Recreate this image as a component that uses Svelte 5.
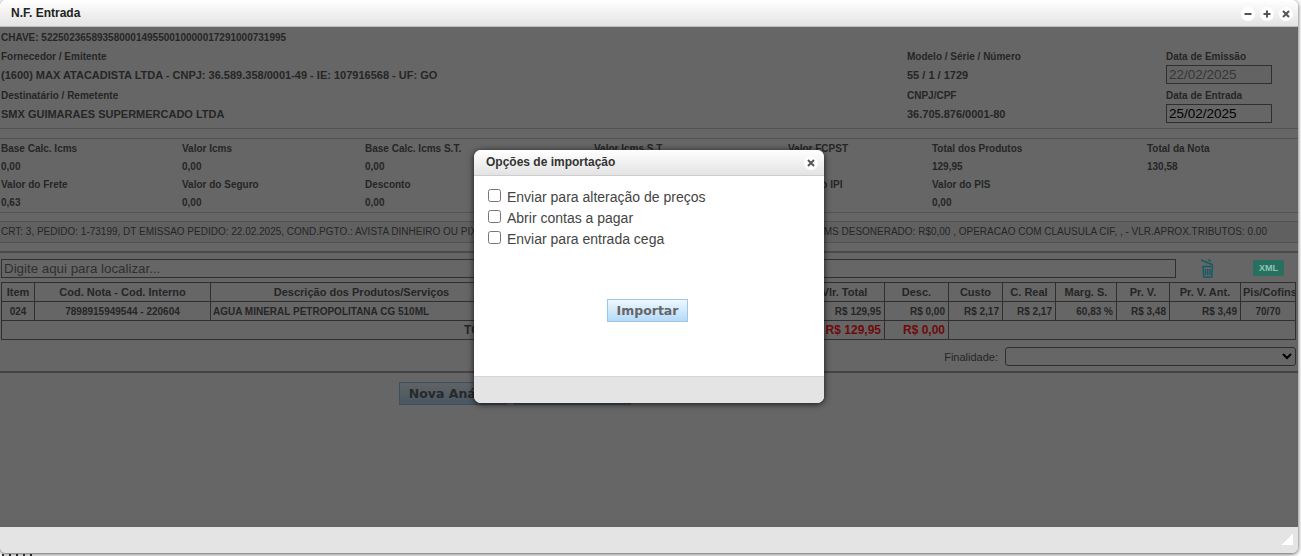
<script lang="ts">
	const totals = [
		[
			['Base Calc. Icms', '0,00'],
			['Valor Icms', '0,00'],
			['Base Calc. Icms S.T.', '0,00'],
			['Valor Icms S.T', '0,00'],
			['Valor FCPST', '0,00'],
			['Total dos Produtos', '129,95'],
			['Total da Nota', '130,58']
		],
		[
			['Valor do Frete', '0,63'],
			['Valor do Seguro', '0,00'],
			['Desconto', '0,00'],
			['Outras Despesas', '0,00'],
			['Valor do IPI', '0,00'],
			['Valor do PIS', '0,00'],
			['', '']
		]
	];
	const columns = [33, 176, 302, 292, 80, 64, 54, 53, 61, 53, 71, 55];
	const heads = [
		'Item',
		'Cod. Nota - Cod. Interno',
		'Descrição dos Produtos/Serviços',
		'',
		'Vlr. Total',
		'Desc.',
		'Custo',
		'C. Real',
		'Marg. S.',
		'Pr. V.',
		'Pr. V. Ant.',
		'Pis/Cofins'
	];
	const options = [
		'Enviar para alteração de preços',
		'Abrir contas a pagar',
		'Enviar para entrada cega'
	];
</script>

<div class="page">
	<div class="peek"></div>
	<div class="peek bottom"></div>
	<div class="window">
		<header class="titlebar">
			<span class="title">N.F. Entrada</span>
			<div class="controls">
				<button aria-label="minimizar" class="ctl">
					<svg viewBox="0 0 10 10"><path d="M1.5 5h7" /></svg>
				</button>
				<button aria-label="maximizar" class="ctl">
					<svg viewBox="0 0 10 10"><path d="M1.5 5h7M5 1.5v7" /></svg>
				</button>
				<button aria-label="fechar" class="ctl">
					<svg viewBox="0 0 10 10"><path d="M2 2l6 6M8 2l-6 6" /></svg>
				</button>
			</div>
		</header>

		<main class="body">
			<div class="chave">CHAVE: 52250236589358000149550010000017291000731995</div>
			<div class="head-grid">
				<span class="lbl">Fornecedor / Emitente</span>
				<span class="lbl">Modelo / Série / Número</span>
				<span class="lbl">Data de Emissão</span>
				<span class="val">(1600) MAX ATACADISTA LTDA - CNPJ: 36.589.358/0001-49 - IE: 107916568 - UF: GO</span>
				<span class="val">55 / 1 / 1729</span>
				<input class="date" disabled value="22/02/2025" />
				<span class="lbl">Destinatário / Remetente</span>
				<span class="lbl">CNPJ/CPF</span>
				<span class="lbl">Data de Entrada</span>
				<span class="val">SMX GUIMARAES SUPERMERCADO LTDA</span>
				<span class="val">36.705.876/0001-80</span>
				<input class="date" value="25/02/2025" />
			</div>

			<div class="gap"></div>

			<div class="totals">
				{#each totals as row}
					{#each row as cell}
						<div class="cell">
							<span class="lbl">{cell[0]}</span>
							<span class="amount">{cell[1]}</span>
						</div>
					{/each}
				{/each}
			</div>

			<div class="thin"></div>
			<div class="info">
				CRT: 3, PEDIDO: 1-73199, DT EMISSAO PEDIDO: 22.02.2025, COND.PGTO.: AVISTA DINHEIRO OU PIX, FRETE: R$0,63 , DESC.: R$0,00 , BASE ST: R$0,00 , FCP: R$0,00 , VLR.ICMS DESONERADO: R$0,00 , OPERACAO COM CLAUSULA CIF, , - VLR.APROX.TRIBUTOS: 0.00
			</div>
			<div class="spacer"></div>

			<div class="search-row">
				<input class="search" placeholder="Digite aqui para localizar..." />
				<svg class="trash" viewBox="0 0 15 19" aria-hidden="true">
					<path d="M1 1l12 5M8 .8l3 1.4" />
					<path d="M3 7.5h9.5l-.7 10.5H3.7zM5.5 10v6M7.7 10v6M10 10v6" />
				</svg>
				<span class="xml">XML</span>
			</div>

			<table>
				<colgroup>
					{#each columns as w}
						<col style={`width:${w}px`} />
					{/each}
				</colgroup>
				<thead>
					<tr>
						{#each heads as h}
							<th>{h}</th>
						{/each}
					</tr>
				</thead>
				<tbody>
					<tr>
						<td class="c">024</td>
						<td class="c">7898915949544 - 220604</td>
						<td>AGUA MINERAL PETROPOLITANA CG 510ML</td>
						<td></td>
						<td class="r">R$ 129,95</td>
						<td class="r">R$ 0,00</td>
						<td class="r">R$ 2,17</td>
						<td class="r">R$ 2,17</td>
						<td class="r">60,83 %</td>
						<td class="r">R$ 3,48</td>
						<td class="r">R$ 3,49</td>
						<td class="c">70/70</td>
					</tr>
					<tr class="sum">
						<td colspan="3" class="r total">TOTAL:</td>
						<td></td>
						<td class="r red"><span>R$ 129,95</span></td>
						<td class="r red"><span>R$ 0,00</span></td>
						<td colspan="6"></td>
					</tr>
				</tbody>
			</table>

			<div class="finalidade">
				<label for="fin">Finalidade:</label>
				<select id="fin"><option></option></select>
			</div>
			<div class="rule"></div>

			<div class="actions">
				<button class="btn first">Nova Análise</button>
				<button class="btn second">Importar Nota</button>
			</div>

			<div class="overlay"></div>

			<section class="modal">
				<div class="modal-head">
					<span>Opções de importação</span>
					<button aria-label="fechar" class="ctl">
						<svg viewBox="0 0 10 10"><path d="M2 2l6 6M8 2l-6 6" /></svg>
					</button>
				</div>
				<div class="modal-body">
					{#each options as o}
						<label class="opt"><input type="checkbox" />{o}</label>
					{/each}
					<button class="btn import">Importar</button>
				</div>
				<div class="modal-foot"></div>
			</section>
		</main>

		<footer class="foot">
			<span class="grip"></span>
		</footer>
	</div>
</div>

<style>
	:global(body) {
		margin: 0;
		background: #fff;
		font-family: 'Liberation Sans', Arial, sans-serif;
	}
	.page {
		position: relative;
		height: 556px;
		overflow: hidden;
	}
	.peek {
		position: absolute;
		left: 140px;
		top: 0;
		width: 45px;
		height: 2px;
		background: repeating-linear-gradient(90deg, #222 0 2px, #fff 2px 3px);
	}
	.peek.bottom {
		left: 2px;
		top: 554px;
		width: 30px;
		background: repeating-linear-gradient(90deg, #333 0 2px, #fff 2px 7px);
	}
	.window {
		position: relative;
		width: 1298px;
		height: 553px;
		display: flex;
		flex-direction: column;
		border-radius: 6px;
		box-shadow: 0 1px 4px rgba(0, 0, 0, 0.7);
		overflow: hidden;
		background: #fff;
	}
	.titlebar {
		height: 27px;
		flex: none;
		box-sizing: border-box;
		display: flex;
		align-items: center;
		justify-content: space-between;
		padding: 0 5px 0 11px;
		background: linear-gradient(#fff, #e3e3e3);
		border-bottom: 1px solid #bbb;
	}
	.title {
		font-size: 12px;
		font-weight: bold;
		color: #222;
	}
	.controls {
		display: flex;
		gap: 5px;
		margin-top: 2px;
	}
	.ctl {
		width: 14px;
		height: 14px;
		padding: 2px;
		border: 0;
		border-radius: 50%;
		background: #fff;
		display: block;
	}
	.ctl svg {
		display: block;
		width: 10px;
		height: 10px;
		fill: none;
		stroke: #555;
		stroke-width: 2;
	}
	.body {
		position: relative;
		flex: 1;
		min-height: 0;
		background: #fff;
		color: #606060;
		font-size: 10px;
	}
	.overlay {
		position: absolute;
		inset: 0;
		background: rgba(0, 0, 0, 0.6);
	}
	.chave {
		height: 19px;
		line-height: 21px;
		padding-left: 1px;
		font-weight: bold;
	}
	.lbl {
		font-weight: bold;
		line-height: 19px;
	}
	.head-grid {
		display: grid;
		grid-template-columns: 906px 259px 1fr;
		grid-auto-rows: 19.5px;
		align-items: center;
		padding-left: 1px;
		padding-bottom: 4px;
		border-bottom: 1px solid #ccc;
	}
	.head-grid .lbl {
		padding-top: 1px;
	}
	.val {
		font-size: 11px;
		font-weight: bold;
		white-space: nowrap;
	}
	.date {
		box-sizing: border-box;
		width: 106px;
		height: 19px;
		margin-bottom: 2px;
		padding: 0 2px;
		border: 1px solid #777;
		background: #fff;
		font: 13.5px 'Liberation Sans', Arial, sans-serif;
		color: #000;
	}
	.date:disabled {
		color: #888;
		background: #f8f8f8;
	}
	.gap {
		height: 9px;
	}
	.totals {
		display: grid;
		grid-template-columns: 181px 183px 229px 194px 144px 215px 1fr;
		padding-left: 1px;
		border-top: 1px solid #ccc;
		border-bottom: 1px solid #ccc;
		padding-bottom: 1px;
	}
	.cell {
		display: flex;
		flex-direction: column;
		height: 36px;
		line-height: 18px;
	}
	.amount {
		font-weight: bold;
		line-height: 18px;
	}
	.thin {
		height: 8px;
		border-bottom: 1px solid #ccc;
	}
	.info {
		height: 20px;
		line-height: 19px;
		padding-left: 1px;
		background: #f0f0f0;
		border-bottom: 1px solid #ccc;
		white-space: nowrap;
		overflow: hidden;
	}
	.spacer {
		height: 8px;
	}
	.search-row {
		display: flex;
		align-items: flex-start;
		height: 19px;
		border-top: 2px solid #bbb;
		padding-top: 6px;
	}
	.search {
		box-sizing: border-box;
		width: 1175px;
		height: 19px;
		margin-left: 1px;
		padding: 0 2px;
		border: 1px solid #777;
		background: #fff;
		font: 13.33px 'Liberation Sans', Arial, sans-serif;
	}
	.search::placeholder {
		color: #777;
	}
	.trash {
		position: relative;
		z-index: 1;
		width: 15px;
		height: 19px;
		margin-left: 24px;
		fill: none;
		stroke: #145a60;
		stroke-width: 1.4;
	}
	.xml {
		position: relative;
		z-index: 1;
		width: 31px;
		height: 16px;
		margin: 1px 0 0 38px;
		border-radius: 2px;
		background: #27705f;
		color: #8fc4b6;
		font-size: 9px;
		font-weight: bold;
		line-height: 16px;
		text-align: center;
	}
	table {
		table-layout: fixed;
		border-collapse: collapse;
		width: 1294px;
		margin: 4px 0 0 1px;
		color: #606060;
	}
	th,
	td {
		height: 18px;
		padding: 0 2px;
		border: 1px solid #777;
		overflow: hidden;
		white-space: nowrap;
		font-weight: bold;
	}
	th {
		font-size: 11px;
	}
	.c {
		text-align: center;
	}
	.r {
		text-align: right;
		padding-right: 3px;
	}
	.total,
	.red {
		font-size: 12px;
	}
	.total {
		padding-right: 5px;
	}
	.red span {
		position: relative;
		z-index: 1;
		color: #700a0a;
	}
	.finalidade {
		display: flex;
		justify-content: flex-end;
		align-items: center;
		gap: 7px;
		height: 19px;
		margin-top: 7px;
		padding-right: 2px;
		font-size: 11px;
	}
	select {
		width: 291px;
		height: 19px;
		background: #fff;
		border: 1px solid #777;
		border-radius: 3px;
	}
	.rule {
		height: 5px;
		border-bottom: 2px solid #aaa;
	}
	.actions {
		display: flex;
		gap: 7px;
		margin: 9px 0 0 399px;
	}
	.btn {
		box-sizing: border-box;
		height: 23px;
		padding: 0;
		border: 1px solid #9cc6ea;
		background: linear-gradient(#eef8ff, #b4daf8);
		color: #666;
		font: bold 12.5px 'DejaVu Sans', Verdana, sans-serif;
	}
	.first {
		width: 108px;
		padding-left: 3px;
	}
	.second {
		width: 117px;
	}
	.modal {
		position: absolute;
		z-index: 2;
		left: 474px;
		top: 123px;
		width: 350px;
		height: 253px;
		display: flex;
		flex-direction: column;
		border-radius: 7px;
		overflow: hidden;
		background: #fff;
		box-shadow: 0 1px 6px rgba(0, 0, 0, 0.8);
	}
	.modal-head {
		height: 26px;
		flex: none;
		box-sizing: border-box;
		display: flex;
		align-items: center;
		justify-content: space-between;
		padding: 0 6px 0 12px;
		background: linear-gradient(#fff, #e3e3e3);
		border-bottom: 1px solid #ccc;
		font-size: 12px;
		font-weight: bold;
		color: #333;
	}
	.modal-head span {
		margin-top: -2px;
	}
	.modal-body {
		flex: 1;
		display: flex;
		flex-direction: column;
		align-items: flex-start;
		padding: 10px 14px 0;
	}
	.opt {
		display: flex;
		align-items: center;
		height: 21px;
		font-size: 14px;
		color: #444;
	}
	.opt input {
		width: 13px;
		height: 13px;
		margin: 0 6px 2px 0;
	}
	.import {
		width: 81px;
		margin: 50px 0 0 119px;
	}
	.modal-foot {
		height: 27px;
		flex: none;
		background: #e4e4e4;
		border-top: 1px solid #d4d4d4;
		box-sizing: border-box;
	}
	.foot {
		position: relative;
		height: 26px;
		flex: none;
		background: #e4e4e4;
	}
	.grip {
		position: absolute;
		right: 5px;
		bottom: 8px;
		width: 11px;
		height: 11px;
		background: linear-gradient(135deg, transparent 50%, #fff 50%);
	}
</style>
